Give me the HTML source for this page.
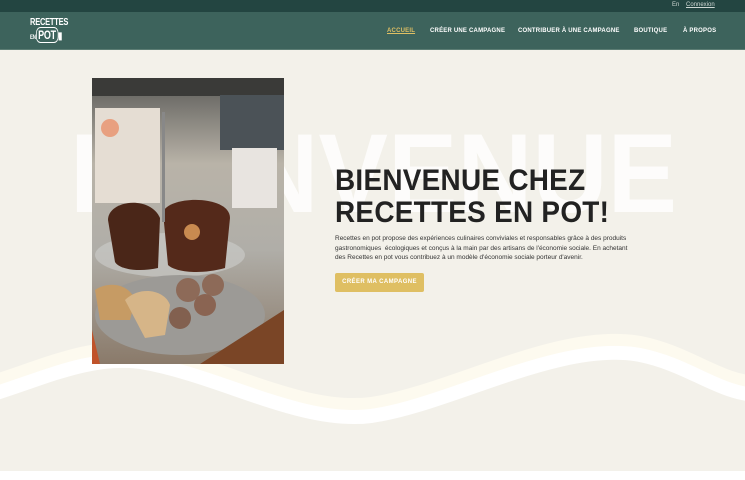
<!DOCTYPE html>
<html><head><meta charset="utf-8"><style>
*{margin:0;padding:0;box-sizing:border-box}
body{width:745px;height:480px;overflow:hidden;background:#fff;font-family:"Liberation Sans",sans-serif;position:relative}
.top{position:absolute;left:0;top:0;width:745px;height:12px;background:#234541;color:#cfd8d4;font-size:6px}
.top span{position:absolute;top:2px}
.nav{position:absolute;left:0;top:12px;width:745px;height:38px;background:#3d635c;border-bottom:1px solid #5c7d74}
.nav a{position:absolute;top:16px;font-size:6px;font-weight:bold;color:#fff;letter-spacing:.2px;text-decoration:none}
.main{position:absolute;left:0;top:50px;width:745px;height:421px;background:#f3f1ea;overflow:hidden}
h1{position:absolute;left:335px;top:165px;font-size:30px;line-height:32px;color:#222;font-weight:bold;letter-spacing:.3px;transform:scaleX(.93);transform-origin:left;white-space:nowrap}
p{position:absolute;left:335px;top:234px;width:300px;font-size:6.5px;line-height:9.6px;color:#333}
.btn{position:absolute;left:335px;top:273px;width:89px;height:19px;background:#dfbf63;border-radius:2px;color:#fff;font-size:6px;font-weight:bold;letter-spacing:.4px;text-align:center;line-height:19px}
</style></head><body>
<div class="top"><span style="left:672px">En</span><span style="left:686px;text-decoration:underline">Connexion</span></div>
<div class="nav">
 <div style="position:absolute;left:30px;top:6px;color:#fff;font-weight:bold;font-size:10px;line-height:10px;letter-spacing:-.3px;transform:scaleX(.75);transform-origin:left">RECETTES<br><span style="font-size:6px">EN</span><span style="border:1px solid #fff;border-radius:6px;padding:0 2px;font-size:12px;line-height:14px">POT</span>▮</div>
 <a style="left:387px;color:#dfbf63;text-decoration:underline">ACCUEIL</a>
 <a style="left:430px">CRÉER UNE CAMPAGNE</a>
 <a style="left:518px">CONTRIBUER À UNE CAMPAGNE</a>
 <a style="left:634px">BOUTIQUE</a>
 <a style="left:683px">À PROPOS</a>
</div>
<div class="main"></div>
<svg style="position:absolute;left:0;top:0" width="745" height="480">
 <text x="70" y="212" textLength="607" lengthAdjust="spacingAndGlyphs" font-family="Liberation Sans" font-weight="bold" font-size="112" fill="#fff" opacity=".85">BIENVENUE</text>
 <path d="M-10,385 C40,370 90,345 140,352 C220,365 300,415 371,406 C450,395 560,330 640,345 C690,355 720,385 760,385" stroke="#fdfaef" stroke-width="18" fill="none"/>
 <path d="M-10,395 C40,380 90,355 140,362 C220,375 300,425 371,416 C450,405 560,340 640,355 C690,365 720,395 760,395" stroke="#fff" stroke-width="14" fill="none"/>
 <defs><clipPath id="c"><rect x="92" y="78" width="192" height="286"/></clipPath>
 <linearGradient id="bg" x1="0" y1="0" x2="0" y2="1"><stop offset="0" stop-color="#5b5b58"/><stop offset=".3" stop-color="#b9b3a8"/><stop offset=".6" stop-color="#b0aea8"/><stop offset="1" stop-color="#8a7a6a"/></linearGradient></defs>
 <g clip-path="url(#c)">
  <rect x="92" y="78" width="192" height="286" fill="url(#bg)"/>
  <rect x="92" y="78" width="192" height="18" fill="#3a3a38"/>
  <rect x="220" y="95" width="64" height="55" fill="#4b5257"/>
  <rect x="95" y="108" width="65" height="95" fill="#e5ddd3"/>
  <circle cx="110" cy="128" r="9" fill="#e8a080"/>
  <rect x="232" y="148" width="45" height="60" fill="#e8e4e0"/>
  <ellipse cx="170" cy="255" rx="75" ry="22" fill="#c9c9c6" opacity=".7"/>
  <ellipse cx="180" cy="315" rx="85" ry="40" fill="#9c9a96"/>
  <path d="M200,364 L284,310 L284,364Z" fill="#7a4526"/>
  <path d="M95,290 C110,280 130,285 135,300 L130,320 L100,320Z" fill="#c69b64"/>
  <path d="M125,300 C140,285 165,290 170,305 L165,335 L145,338Z" fill="#d6b588"/>
  <circle cx="188" cy="290" r="12" fill="#8d6a58"/><circle cx="213" cy="285" r="11" fill="#8d6a58"/>
  <circle cx="205" cy="305" r="11" fill="#8a6452"/><circle cx="180" cy="318" r="11" fill="#82604f"/>
  <path d="M108,220 C108,200 150,195 160,218 L158,268 C140,272 120,270 115,262Z" fill="#4a2618"/>
  <path d="M163,212 C170,195 230,195 230,218 L225,268 C200,275 175,272 168,265Z" fill="#54291a"/>
  <circle cx="192" cy="232" r="8" fill="#c98a50"/>
  <rect x="162" y="112" width="3" height="110" fill="#888"/>
  <path d="M92,330 L100,364 L92,364Z" fill="#c0532a"/>
 </g>
</svg>
<h1>BIENVENUE CHEZ<br>RECETTES EN POT!</h1>
<p>Recettes en pot propose des expériences culinaires conviviales et responsables grâce à des produits gastronomiques&nbsp; écologiques et conçus à la main par des artisans de l'économie sociale. En achetant des Recettes en pot vous contribuez à un modèle d'économie sociale porteur d'avenir.</p>
<div class="btn">CRÉER MA CAMPAGNE</div>
</body></html>
